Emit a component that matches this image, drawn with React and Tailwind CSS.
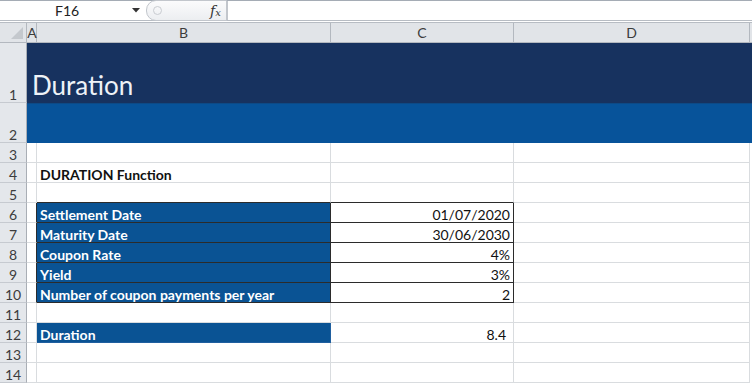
import React from "react";

const FONT = { fontFamily: "Lato, 'Open Sans', sans-serif" };

const G = "border-[#d9dcdf]"; // gridline
const DK = "border-[#2b2b2b]";

function RowHead({ n, h }) {
  return (
    <div
      className={`w-[27px] shrink-0 bg-[#e4e7eb] border-r border-b border-r-[#a9aeb5] border-b-[#c6cad0] flex items-end justify-center pb-0 text-[14px] leading-[15px] text-[#3c3c3c]`}
      style={{ height: h }}
    >
      {n}
    </div>
  );
}

function Row({ n, h = 20, children }) {
  return (
    <div className="flex" style={{ height: h }}>
      <RowHead n={n} h={h} />
      {children}
    </div>
  );
}

function Cell({ w, cls = "", children }) {
  return (
    <div
      className={`shrink-0 h-full flex items-end pb-0 text-[14px] leading-[14px] ${cls}`}
      style={{ width: w }}
    >
      {children}
    </div>
  );
}

const WA = 10, WB = 294, WC = 183, WD = 236;

function PlainRow({ n, bTop = false }) {
  return (
    <Row n={n}>
      <Cell w={WA} cls={`border-r border-b ${G}`} />
      <Cell w={WB} cls={`border-r border-b ${G} ${bTop ? "border-b-[#2b2b2b]" : ""}`} />
      <Cell w={WC} cls={`border-r border-b ${G} ${bTop ? "border-b-[#2b2b2b]" : ""}`} />
      <Cell w={WD} cls={`border-r border-b ${G}`} />
    </Row>
  );
}

function TableRow({ n, label, value }) {
  return (
    <Row n={n}>
      <Cell w={WA} cls={`border-r border-b border-b-[#d9dcdf] border-r-[#2b2b2b]`} />
      <Cell w={WB} cls={`border-r border-b ${DK} bg-[#0a5394] text-white font-bold pl-[3px]`}>
        {label}
      </Cell>
      <Cell w={WC} cls={`border-r border-b ${DK} justify-end pr-[3px] text-[#111]`}>
        {value}
      </Cell>
      <Cell w={WD} cls={`border-r border-b ${G}`} />
    </Row>
  );
}

export default function App() {
  return (
    <div className="w-[752px] h-[385px] overflow-hidden bg-white" style={FONT}>
      {/* formula bar */}
      <div className="h-[21px] flex border-t border-[#a5acb5] border-b border-b-[#b7bcc3]">
        <div className="w-[146px] shrink-0 flex items-center relative">
          <span className="absolute left-[55px] top-[1px] text-[14px] leading-[18px] text-[#222]">F16</span>
          <svg className="absolute left-[132px] top-[7px]" width="8" height="5" viewBox="0 0 8 5">
            <path d="M0 0 H8 L4 4.5 Z" fill="#333" />
          </svg>
        </div>
        <div className="w-[81px] shrink-0 relative rounded-l-[10px] border border-[#c2c6cc] bg-gradient-to-b from-[#fbfbfc] to-[#eceef1] mt-[-1px] h-[21px]">
          <div className="absolute left-[6px] top-[5px] w-[9px] h-[9px] rounded-full border border-[#c9ccd1]" />
          <span
            className="absolute left-[63px] top-[0px] text-[14px] italic text-[#333]"
            style={{ fontFamily: "'DejaVu Serif', 'Liberation Serif', serif" }}
          >
            <i>f</i><span className="text-[10px]">x</span>
          </span>
        </div>
        <div className="flex-1 border-l border-[#c2c6cc]" />
      </div>
      <div className="h-[1px] bg-white" />
      {/* column header */}
      <div className="flex h-[21px] border-t border-[#b7bcc3] bg-[#e1e4e8] text-[14px] text-[#3c3c3c] leading-[19px]">
        <div className="w-[27px] shrink-0 border-r border-b border-[#b3b8bf] relative">
          <svg className="absolute right-[3px] bottom-[3px]" width="12" height="12" viewBox="0 0 12 12">
            <path d="M12 0 V12 H0 Z" fill="#c4c8cd" />
          </svg>
        </div>
        <div className="w-[10px] shrink-0 border-r border-b border-[#b3b8bf] flex justify-center pl-[1px]">A</div>
        <div className="w-[294px] shrink-0 border-r border-b border-[#b3b8bf] flex justify-center">B</div>
        <div className="w-[183px] shrink-0 border-r border-b border-[#b3b8bf] flex justify-center">C</div>
        <div className="w-[236px] shrink-0 border-r border-b border-[#b3b8bf] flex justify-center">D</div>
        <div className="flex-1 border-b border-[#b3b8bf]" />
      </div>
      {/* row 1 */}
      <Row n={1} h={60}>
        <div className="flex-1 bg-[#17325f] flex items-end pb-[2px] pl-[5px] text-[26px] leading-[32px] text-[#eef2f7]">
          Duration
        </div>
      </Row>
      <Row n={2} h={40}>
        <div className="flex-1 bg-[#07539a] border-t border-[#0d4a86]" />
      </Row>
      <PlainRow n={3} />
      <Row n={4}>
        <Cell w={WA} cls={`border-r border-b ${G}`} />
        <Cell w={WB} cls={`border-r border-b ${G} font-bold text-[#111] pl-[3px]`}>DURATION Function</Cell>
        <Cell w={WC} cls={`border-r border-b ${G}`} />
        <Cell w={WD} cls={`border-r border-b ${G}`} />
      </Row>
      <PlainRow n={5} bTop />
      <TableRow n={6} label="Settlement Date" value="01/07/2020" />
      <TableRow n={7} label="Maturity Date" value="30/06/2030" />
      <TableRow n={8} label="Coupon Rate" value="4%" />
      <TableRow n={9} label="Yield" value="3%" />
      <TableRow n={10} label="Number of coupon payments per year" value="2" />
      <PlainRow n={11} />
      <Row n={12}>
        <Cell w={WA} cls={`border-r border-b ${G}`} />
        <Cell w={WB} cls={`border-r border-b border-[#1f5f9f] bg-[#0a5394] text-white font-bold pl-[3px]`}>Duration</Cell>
        <Cell w={WC} cls={`border-r border-b ${G} justify-end pr-[7px] text-[#111]`}>8.4</Cell>
        <Cell w={WD} cls={`border-r border-b ${G}`} />
      </Row>
      <PlainRow n={13} />
      <PlainRow n={14} />
    </div>
  );
}
